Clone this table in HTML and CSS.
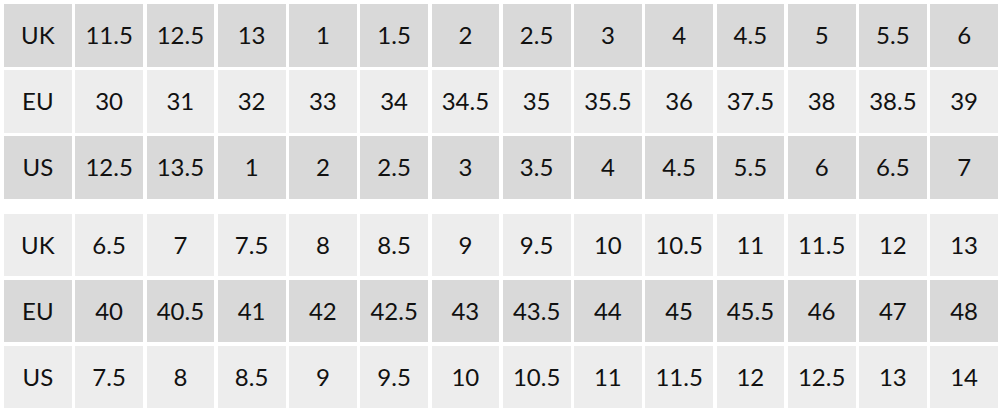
FILE: index.html
```html
<!DOCTYPE html>
<html lang="en">
<head>
<meta charset="utf-8">
<title>Size chart</title>
<link rel="stylesheet" href="styles.css">
</head>
<body>
<div class="chart">
  <div class="grid">
    <div class="c d">UK</div><div class="c d">11.5</div><div class="c d">12.5</div><div class="c d">13</div><div class="c d">1</div><div class="c d">1.5</div><div class="c d">2</div><div class="c d">2.5</div><div class="c d">3</div><div class="c d">4</div><div class="c d">4.5</div><div class="c d">5</div><div class="c d">5.5</div><div class="c d">6</div>
    <div class="c l">EU</div><div class="c l">30</div><div class="c l">31</div><div class="c l">32</div><div class="c l">33</div><div class="c l">34</div><div class="c l">34.5</div><div class="c l">35</div><div class="c l">35.5</div><div class="c l">36</div><div class="c l">37.5</div><div class="c l">38</div><div class="c l">38.5</div><div class="c l">39</div>
    <div class="c d">US</div><div class="c d">12.5</div><div class="c d">13.5</div><div class="c d">1</div><div class="c d">2</div><div class="c d">2.5</div><div class="c d">3</div><div class="c d">3.5</div><div class="c d">4</div><div class="c d">4.5</div><div class="c d">5.5</div><div class="c d">6</div><div class="c d">6.5</div><div class="c d">7</div>
  </div>
  <div class="grid second">
    <div class="c l">UK</div><div class="c l">6.5</div><div class="c l">7</div><div class="c l">7.5</div><div class="c l">8</div><div class="c l">8.5</div><div class="c l">9</div><div class="c l">9.5</div><div class="c l">10</div><div class="c l">10.5</div><div class="c l">11</div><div class="c l">11.5</div><div class="c l">12</div><div class="c l">13</div>
    <div class="c d">EU</div><div class="c d">40</div><div class="c d">40.5</div><div class="c d">41</div><div class="c d">42</div><div class="c d">42.5</div><div class="c d">43</div><div class="c d">43.5</div><div class="c d">44</div><div class="c d">45</div><div class="c d">45.5</div><div class="c d">46</div><div class="c d">47</div><div class="c d">48</div>
    <div class="c l">US</div><div class="c l">7.5</div><div class="c l">8</div><div class="c l">8.5</div><div class="c l">9</div><div class="c l">9.5</div><div class="c l">10</div><div class="c l">10.5</div><div class="c l">11</div><div class="c l">11.5</div><div class="c l">12</div><div class="c l">12.5</div><div class="c l">13</div><div class="c l">14</div>
  </div>
</div>
</body>
</html>
```
FILE: styles.css
```css
html, body {
  margin: 0;
  padding: 0;
  background: #ffffff;
}
.chart {
  width: 1000px;
  height: 412px;
  box-sizing: border-box;
  padding: 4px 2px 0 4px;
  font-family: Lato, "Open Sans", "Liberation Sans", sans-serif;
  color: #111111;
}
.grid {
  display: grid;
  grid-template-columns: repeat(14, 1fr);
  grid-auto-rows: 62.5px;
  gap: 3.5px;
}
.second {
  margin-top: 15px;
}
.c {
  display: flex;
  align-items: center;
  justify-content: center;
  font-size: 24px;
  line-height: 1;
}
.d {
  background: #d9d9d9;
}
.l {
  background: #ededed;
}
```
